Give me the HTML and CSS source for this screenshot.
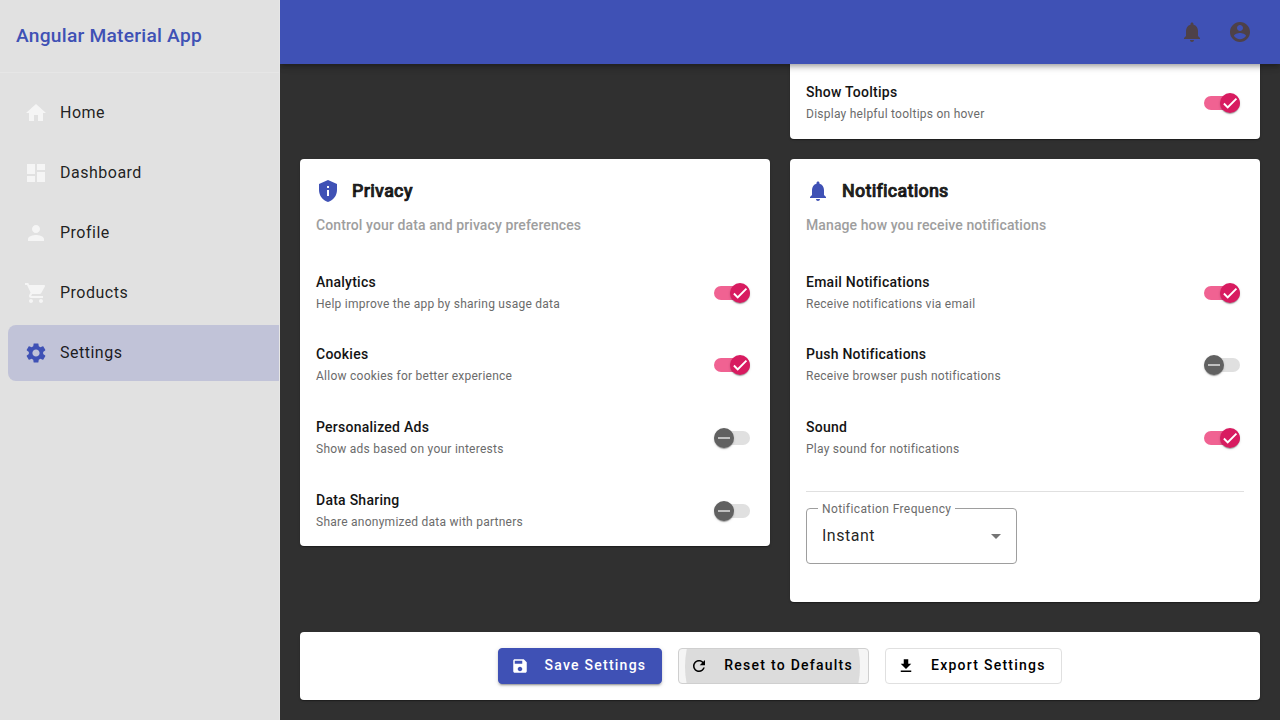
FILE: index.html
```html
<!DOCTYPE html>
<html lang="en">
<head>
<meta charset="utf-8">
<title>Angular Material App</title>
<link rel="stylesheet" href="styles.css">
</head>
<body>
<svg class="defs">
  <symbol id="home" viewBox="0 0 24 24"><path d="M10 20v-6h4v6h5v-8h3L12 3 2 12h3v8z"/></symbol>
  <symbol id="dashboard" viewBox="0 0 24 24"><path d="M3 13h8V3H3v10zm0 8h8v-6H3v6zm10 0h8V11h-8v10zm0-18v6h8V3h-8z"/></symbol>
  <symbol id="person" viewBox="0 0 24 24"><path d="M12 12c2.21 0 4-1.79 4-4s-1.79-4-4-4-4 1.79-4 4 1.790 4 4 4zm0 2c-2.670 0-8 1.340-8 4v2h16v-2c0-2.660-5.330-4-8-4z"/></symbol>
  <symbol id="cart" viewBox="0 0 24 24"><path d="M7 18c-1.100 0-1.990.9-1.990 2S5.900 22 7 22s2-.9 2-2-.9-2-2-2zM1 2v2h2l3.600 7.590-1.350 2.450c-.16.28-.25.61-.25.96 0 1.100.9 2 2 2h12v-2H7.420c-.14 0-.25-.11-.25-.25l.03-.12.9-1.630h7.450c.75 0 1.410-.41 1.750-1.030l3.580-6.490c.08-.14.12-.31.12-.48 0-.55-.45-1-1-1H5.210l-.94-2H1zm16 16c-1.100 0-1.990.9-1.990 2s.89 2 1.990 2 2-.9 2-2-.9-2-2-2z"/></symbol>
  <symbol id="settings" viewBox="0 0 24 24"><path d="M19.140 12.940c.04-.3.06-.61.06-.94 0-.32-.02-.64-.07-.94l2.030-1.580c.18-.14.23-.41.12-.61l-1.920-3.320c-.12-.22-.37-.29-.59-.22l-2.390.96c-.5-.38-1.030-.7-1.620-.94l-.36-2.540c-.04-.24-.24-.41-.48-.41h-3.840c-.24 0-.43.17-.47.41l-.36 2.540c-.59.24-1.130.57-1.620.94l-2.390-.96c-.22-.08-.47 0-.59.22L2.740 8.870c-.12.21-.08.47.12.61l2.030 1.580c-.05.3-.09.63-.09.94s.02.64.07.94l-2.030 1.580c-.18.14-.23.41-.12.61l1.920 3.320c.12.22.37.29.59.22l2.390-.96c.5.38 1.030.7 1.620.94l.36 2.540c.05.24.24.41.48.41h3.840c.24 0 .44-.17.47-.41l.36-2.540c.59-.24 1.130-.56 1.620-.94l2.390.96c.22.08.47 0 .59-.22l1.920-3.320c.12-.22.07-.47-.12-.61l-2.010-1.580zM12 15.600c-1.980 0-3.600-1.620-3.600-3.600s1.620-3.600 3.600-3.600 3.600 1.620 3.600 3.600-1.620 3.600-3.600 3.600z"/></symbol>
  <symbol id="bell" viewBox="0 0 24 24"><path d="M12 22c1.100 0 2-.9 2-2h-4c0 1.100.89 2 2 2zm6-6v-5c0-3.070-1.640-5.640-4.500-6.320V4c0-.83-.67-1.500-1.500-1.500s-1.500.67-1.500 1.500v.68C7.630 5.360 6 7.920 6 11v5l-2 2v1h16v-1l-2-2z"/></symbol>
  <symbol id="account" viewBox="0 0 24 24"><path d="M12 2C6.480 2 2 6.480 2 12s4.480 10 10 10 10-4.480 10-10S17.520 2 12 2zm0 3c1.660 0 3 1.340 3 3s-1.340 3-3 3-3-1.340-3-3 1.340-3 3-3zm0 14.200c-2.500 0-4.710-1.280-6-3.220.03-1.990 4-3.080 6-3.080 1.990 0 5.970 1.090 6 3.080-1.290 1.940-3.500 3.220-6 3.220z"/></symbol>
  <symbol id="shield" viewBox="0 0 24 24"><path d="M12 1L3 5v6c0 5.550 3.840 10.740 9 12 5.160-1.260 9-6.450 9-12V5l-9-4zm-1 6h2v2h-2V7zm0 4h2v6h-2v-6z"/></symbol>
  <symbol id="save" viewBox="0 0 24 24"><path d="M17 3H5c-1.110 0-2 .9-2 2v14c0 1.100.89 2 2 2h14c1.100 0 2-.9 2-2V7l-4-4zm-5 16c-1.660 0-3-1.340-3-3s1.340-3 3-3 3 1.340 3 3-1.340 3-3 3zm3-10H5V5h10v4z"/></symbol>
  <symbol id="refresh" viewBox="0 0 24 24"><path d="M17.650 6.350C16.200 4.900 14.210 4 12 4c-4.420 0-7.990 3.580-7.990 8s3.570 8 7.990 8c3.730 0 6.840-2.550 7.730-6h-2.080c-.82 2.330-3.040 4-5.650 4-3.310 0-6-2.690-6-6s2.690-6 6-6c1.660 0 3.140.69 4.220 1.780L13 11h7V4l-2.350 2.350z"/></symbol>
  <symbol id="download" viewBox="0 0 24 24"><path d="M19 9h-4V3H9v6H5l7 7 7-7zM5 18v2h14v-2H5z"/></symbol>
  <symbol id="check" viewBox="0 0 24 24"><path d="M19.690 5.230L8.960 15.960l-4.230-4.230L2.960 13.500l6 6L21.460 7z"/></symbol>
  <symbol id="minus" viewBox="0 0 24 24"><path d="M20 13H4v-2h16v2z"/></symbol>
</svg>

<div class="app">
  <aside class="sidebar">
    <div class="brand">Angular Material App</div>
    <nav class="nav">
      <a class="nav-item"><svg class="icon"><use href="#home"/></svg><span>Home</span></a>
      <a class="nav-item"><svg class="icon"><use href="#dashboard"/></svg><span>Dashboard</span></a>
      <a class="nav-item"><svg class="icon"><use href="#person"/></svg><span>Profile</span></a>
      <a class="nav-item"><svg class="icon"><use href="#cart"/></svg><span>Products</span></a>
      <a class="nav-item active"><svg class="icon"><use href="#settings"/></svg><span>Settings</span></a>
    </nav>
  </aside>

  <div class="main">
    <header class="toolbar">
      <svg class="icon"><use href="#bell"/></svg>
      <svg class="icon"><use href="#account"/></svg>
    </header>

    <main class="content">
      <div class="grid">
        <section class="card card-clipped">
          <div class="row">
            <div><div class="label">Show Tooltips</div><div class="hint">Display helpful tooltips on hover</div></div>
            <div class="toggle on"><span class="thumb"><svg><use href="#check"/></svg></span></div>
          </div>
        </section>

        <section class="card privacy">
          <div class="card-title"><svg class="icon"><use href="#shield"/></svg>Privacy</div>
          <div class="card-sub">Control your data and privacy preferences</div>
          <div class="rows">
            <div class="row">
              <div><div class="label">Analytics</div><div class="hint">Help improve the app by sharing usage data</div></div>
              <div class="toggle on"><span class="thumb"><svg><use href="#check"/></svg></span></div>
            </div>
            <div class="row">
              <div><div class="label">Cookies</div><div class="hint">Allow cookies for better experience</div></div>
              <div class="toggle on"><span class="thumb"><svg><use href="#check"/></svg></span></div>
            </div>
            <div class="row">
              <div><div class="label">Personalized Ads</div><div class="hint">Show ads based on your interests</div></div>
              <div class="toggle"><span class="thumb"><svg><use href="#minus"/></svg></span></div>
            </div>
            <div class="row">
              <div><div class="label">Data Sharing</div><div class="hint">Share anonymized data with partners</div></div>
              <div class="toggle"><span class="thumb"><svg><use href="#minus"/></svg></span></div>
            </div>
          </div>
        </section>

        <section class="card notifications">
          <div class="card-title"><svg class="icon"><use href="#bell"/></svg>Notifications</div>
          <div class="card-sub">Manage how you receive notifications</div>
          <div class="rows">
            <div class="row">
              <div><div class="label">Email Notifications</div><div class="hint">Receive notifications via email</div></div>
              <div class="toggle on"><span class="thumb"><svg><use href="#check"/></svg></span></div>
            </div>
            <div class="row">
              <div><div class="label">Push Notifications</div><div class="hint">Receive browser push notifications</div></div>
              <div class="toggle"><span class="thumb"><svg><use href="#minus"/></svg></span></div>
            </div>
            <div class="row">
              <div><div class="label">Sound</div><div class="hint">Play sound for notifications</div></div>
              <div class="toggle on"><span class="thumb"><svg><use href="#check"/></svg></span></div>
            </div>
          </div>
          <div class="divider"></div>
          <div class="select">
            <span class="select-label">Notification Frequency</span>
            <span class="value">Instant</span>
            <span class="arrow"></span>
          </div>
        </section>
      </div>

      <section class="card actions">
        <button class="btn save"><svg><use href="#save"/></svg><span class="btn-text">Save Settings</span></button>
        <button class="btn reset"><span class="ripple"></span><svg><use href="#refresh"/></svg><span class="btn-text">Reset to Defaults</span></button>
        <button class="btn export"><svg><use href="#download"/></svg><span class="btn-text">Export Settings</span></button>
      </section>
    </main>
  </div>
</div>
</body>
</html>
```

FILE: styles.css
```css
* { box-sizing: border-box; }
body {
  margin: 0;
  font-family: Roboto, "Liberation Sans", sans-serif;
  background: #303030;
  color: rgba(0, 0, 0, 0.87);
}
.defs { display: none; }
.icon { width: 24px; height: 24px; fill: currentColor; flex: none; }
.app { display: flex; height: 720px; overflow: hidden; }

.sidebar {
  position: relative;
  z-index: 3;
  width: 280px;
  flex: none;
  background: #e1e1e1;
  border-right: 1px solid #e6e6e6;
}
.brand {
  height: 73px;
  padding: 0 16px 1px;
  border-bottom: 1px solid #e6e6e6;
  display: flex;
  align-items: center;
  font-size: 19.2px;
  font-weight: 500;
  letter-spacing: 0.24px;
  color: #3f51b5;
}
.nav { padding: 12px 0 0 8px; display: flex; flex-direction: column; gap: 4px; }
.nav-item {
  height: 56px;
  padding-left: 16px;
  display: flex;
  align-items: center;
  gap: 12px;
  font-size: 16px;
  letter-spacing: 0.5px;
  border-radius: 8px 0 0 8px;
  color: rgba(0, 0, 0, 0.87);
}
.nav-item span { padding-bottom: 2px; }
.nav-item .icon { color: #f5f5f5; }
.nav-item.active { background: #c1c3d8; }
.nav-item.active .icon { color: #3f51b5; }

.main { flex: 1; display: flex; flex-direction: column; }
.toolbar {
  position: relative;
  z-index: 2;
  height: 64px;
  flex: none;
  padding-right: 28px;
  display: flex;
  align-items: center;
  justify-content: flex-end;
  gap: 24px;
  background: #3f51b5;
  color: #4e4148;
  box-shadow: 0 2px 4px -1px rgba(0,0,0,.2), 0 4px 5px rgba(0,0,0,.14), 0 1px 10px rgba(0,0,0,.12);
}
.content { flex: 1; padding: 0 20px; }
.grid {
  display: grid;
  grid-template-columns: 470px 470px;
  gap: 20px;
  align-items: start;
}
.card {
  background: #fff;
  border-radius: 4px;
  padding: 0 16px;
  box-shadow: 0 2px 1px -1px rgba(0,0,0,.2), 0 1px 1px rgba(0,0,0,.14), 0 1px 3px rgba(0,0,0,.12);
}
.card-clipped { grid-column: 2; height: 75px; border-radius: 0 0 4px 4px; padding-top: 2.6px; }
.privacy { height: 387px; }
.notifications { height: 443px; }
.card-title {
  padding-top: 20px;
  display: flex;
  align-items: center;
  gap: 12px;
  font-size: 18px;
  font-weight: 500;
  line-height: 24px;
  letter-spacing: 0.225px;
  -webkit-text-stroke: 0.7px currentColor;
}
.card-title .icon { color: #3f51b5; }
.card-sub {
  margin-top: 11px;
  font-size: 14px;
  font-weight: 500;
  line-height: 22px;
  letter-spacing: 0.1px;
  color: #9e9e9e;
}
.rows { padding-top: 20.3px; }
.row {
  height: 72.67px;
  padding-right: 4px;
  display: flex;
  align-items: center;
  justify-content: space-between;
}
.label { font-size: 14px; font-weight: 500; line-height: 20px; letter-spacing: 0.25px; padding-bottom: 2px; color: #141414; }
.hint { font-size: 12px; line-height: 20px; letter-spacing: 0.25px; color: #6b6b6b; }

.toggle {
  width: 36px;
  height: 14px;
  border-radius: 7px;
  background: #e0e0e0;
  display: flex;
  align-items: center;
}
.thumb {
  width: 20px;
  height: 20px;
  flex: none;
  border-radius: 50%;
  background: #616161;
  display: flex;
  align-items: center;
  justify-content: center;
  box-shadow: 0 2px 1px -1px rgba(0,0,0,.2), 0 1px 1px rgba(0,0,0,.14), 0 1px 3px rgba(0,0,0,.12);
}
.thumb svg { width: 18px; height: 18px; fill: #e0e0e0; }
.toggle.on { background: #f06292; justify-content: flex-end; }
.toggle.on .thumb { background: #d81b60; }
.toggle.on svg { fill: #fff; }

.divider { height: 1px; margin-top: 16.3px; background: #e0e0e0; }
.select {
  position: relative;
  width: 211px;
  height: 56px;
  margin-top: 16px;
  padding: 1px 15px 0;
  border: 1px solid #9e9e9e;
  border-radius: 4px;
  display: flex;
  align-items: center;
  justify-content: space-between;
  font-size: 16px;
  letter-spacing: 0.5px;
}
.value { padding-bottom: 2px; }
.select-label {
  position: absolute;
  left: 11px;
  top: -9px;
  padding: 0 4px;
  background: #fff;
  font-size: 12px;
  line-height: 18px;
  letter-spacing: 0.4px;
  color: #6b6b6b;
}
.arrow { border: 5px solid transparent; border-top-color: #757575; border-bottom: 0; }

.actions {
  height: 68px;
  margin-top: 30px;
  display: flex;
  align-items: center;
  justify-content: center;
  gap: 16px;
}
.btn {
  position: relative;
  height: 36px;
  padding: 0 0 0 11px;
  display: flex;
  align-items: center;
  overflow: hidden;
  border: 1px solid #e0e0e0;
  border-radius: 4px;
  background: #fff;
  font-family: inherit;
  font-size: 14px;
  font-weight: 500;
  letter-spacing: 1.25px;
  white-space: nowrap;
  color: #000;
}
.btn svg { position: relative; width: 18px; height: 18px; flex: none; fill: currentColor; margin-right: 16px; }
.btn.save {
  width: 164px;
  padding-left: 11.5px;
  background: #3f51b5;
  border-color: #3f51b5;
  color: #fff;
  box-shadow: 0 3px 1px -2px rgba(0,0,0,.2), 0 2px 2px rgba(0,0,0,.14), 0 1px 5px rgba(0,0,0,.12);
}
.btn.reset { width: 191px; padding-left: 11.3px; background: #f5f5f5; border-color: #cfcfcf; }
.btn-text { position: relative; padding-bottom: 2px; }
.ripple {
  position: absolute;
  left: 6px;
  top: -70px;
  width: 175px;
  height: 175px;
  border-radius: 50%;
  background: #dcdcdc;
}
.btn.export { width: 177px; }
```
